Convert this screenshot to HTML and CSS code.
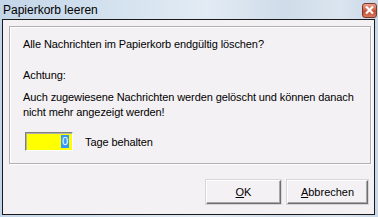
FILE: index.html
```html
<!DOCTYPE html>
<html>
<head>
<meta charset="utf-8">
<link rel="stylesheet" href="styles.css">
</head>
<body>
<div class="frame">
  <div class="titlebar">
    <span class="title">Papierkorb leeren</span>
    <span class="close"><svg width="9" height="8" viewBox="0 0 9 8"><path d="M1 0.5 L8 7.5 M8 0.5 L1 7.5" stroke="#fff" stroke-width="2.2"/></svg></span>
  </div>
  <div class="client">
    <div class="group">
      <p class="line first">Alle Nachrichten im Papierkorb endgültig löschen?</p>
      <p class="line gap1">Achtung:</p>
      <p class="line gap2">Auch zugewiesene Nachrichten werden gelöscht und können danach<br>nicht mehr angezeigt werden!</p>
      <div class="daysrow">
        <div class="input"><span class="sel">0</span></div>
        <span class="label">Tage behalten</span>
      </div>
    </div>
    <div class="buttons">
      <button class="btn ok"><u>O</u>K</button>
      <button class="btn cancel"><u>A</u>bbrechen</button>
    </div>
  </div>
</div>
</body>
</html>
```
FILE: styles.css
```css
html, body {
  margin: 0;
  padding: 0;
}
body {
  width: 378px;
  height: 217px;
  overflow: hidden;
  font-family: "Liberation Sans", Arial, sans-serif;
}
.frame {
  width: 378px;
  height: 217px;
  box-sizing: border-box;
  background: linear-gradient(90deg, #c3d5e8 0%, #d4e2ef 30%, #e2ebf4 55%, #cfdce9 75%, #dbe5ef 90%, #c9d7e6 100%);
  display: flex;
  flex-direction: column;
}
.titlebar {
  height: 19px;
  display: flex;
  align-items: center;
  justify-content: space-between;
  padding: 0 1px 0 3px;
}
.title {
  font-size: 12px;
  color: #000;
  margin-top: 1px;
}
.close {
  width: 15px;
  height: 15px;
  box-sizing: border-box;
  border: 1px solid #7a3a2e;
  border-radius: 3px;
  background: linear-gradient(180deg, #e8a290 0%, #d2654a 45%, #c24a30 55%, #d67a5e 100%);
  display: flex;
  align-items: center;
  justify-content: center;
  margin-top: 1px;
}
.client {
  margin: 0 3px 2px 2px;
  flex: 1;
  border: 1px solid #1a1a1a;
  background: #f4f1f4;
  display: flex;
  flex-direction: column;
}
.group {
  margin: 6px 3px 0 6px;
  border: 1px solid #b3b0b3;
  box-shadow: inset 1px 1px 0 #fff, 1px 1px 0 #fff;
  padding: 10px 0 12px 13px;
  font-size: 11px;
  letter-spacing: -0.1px;
  color: #000;
}
.line {
  margin: 0;
  line-height: 15px;
}
.gap1 { margin-top: 16px; }
.gap2 { margin-top: 7px; }
.daysrow {
  display: flex;
  align-items: center;
  margin-top: 12px;
}
.input {
  width: 48px;
  height: 19px;
  box-sizing: border-box;
  border-top: 1px solid #808080;
  border-left: 1px solid #808080;
  border-right: 1px solid #fff;
  border-bottom: 1px solid #fff;
  box-shadow: inset 1px 1px 0 #b0b0b0;
  background: #ffff00;
  display: flex;
  align-items: center;
  justify-content: flex-end;
  padding-right: 3px;
  margin-left: 2px;
}
.sel {
  background: #3399ff;
  color: #fff;
  font-size: 11px;
  line-height: 13px;
  padding: 0 1px;
}
.label {
  margin-left: 12px;
}
.buttons {
  display: flex;
  justify-content: flex-end;
  gap: 6px;
  margin: 16px 6px 0 0;
}
.btn {
  height: 24px;
  box-sizing: border-box;
  font-family: "Liberation Sans", Arial, sans-serif;
  font-size: 11px;
  color: #000;
  background: #f4f1f4;
  border-top: 1px solid #fff;
  border-left: 1px solid #fff;
  border-right: 1px solid #6e6e6e;
  border-bottom: 1px solid #6e6e6e;
  box-shadow: inset -1px -1px 0 #a8a8a8, 0 0 0 1px #d8d6d8;
  padding: 0;
}
.ok { width: 75px; }
.cancel { width: 81px; }
```
